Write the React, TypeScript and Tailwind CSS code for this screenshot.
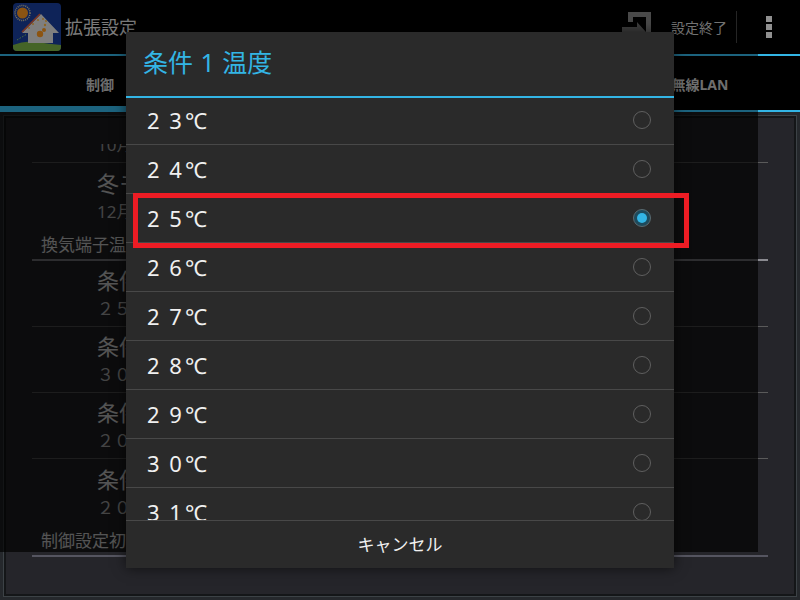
import React from "react"

const FONT = "[font-family:'Noto_Sans','Noto_Sans_CJK_JP','Liberation_Sans',sans-serif]"

const Logo: React.FC = () => (
  <svg width="48" height="48" viewBox="0 0 48 48" className="rounded-sm">
    <rect width="48" height="48" fill="#1b40a0" />
    <path d="M0 48V42Q12 37 24 39T48 42V48Z" fill="#7fb648" />
    <circle cx="9.5" cy="10" r="7.5" fill="none" stroke="#e8d8a8" strokeWidth="1.5" strokeDasharray="1 1" />
    <circle cx="9.5" cy="10" r="5.5" fill="#ff9a20" />
    <path d="M9 30L28 11L46 30H40V40H15V30Z" fill="#e8e8e8" />
    <path d="M9 29L27 11" stroke="#e8603a" strokeWidth="1.5" />
    <circle cx="27" cy="31" r="3.2" fill="#ff9a20" />
    <circle cx="31" cy="27" r="2" fill="#ff9a20" />
    <circle cx="33" cy="18" r="1" fill="#ffb840" />
    <circle cx="30" cy="16" r="1" fill="#ffb840" />
    <circle cx="32" cy="22" r="1.2" fill="#ffb840" />
    <circle cx="25" cy="17" r="1" fill="#ffb840" />
    <circle cx="20" cy="21" r="1" fill="#ffb840" />
    <circle cx="16" cy="25" r="1" fill="#ffb840" />
    <path d="M4 37L14 31" stroke="#8fce6a" strokeWidth="1" strokeDasharray="1.5 1.5" />
  </svg>
)

const Header: React.FC = () => (
  <div className="h-[54px] flex items-center bg-black shrink-0">
    <div className="ml-[13px] h-12 w-12">
      <Logo />
    </div>
    <span className="ml-1 text-[18px] text-[#e0e0e0]">拡張設定</span>
    <div className="ml-auto flex items-center h-full">
      <svg width="31" height="30" viewBox="0 0 31 30" className="self-start mt-[12px]">
        <path d="M6 0H29V28H6V10H11V5H24V23H6Z" fill="#888" fillRule="evenodd" />
        <path d="M0 15H15V10L24 20L15 30V25H0Z" fill="#707070" />
      </svg>
      <span className="ml-[18px] text-[14px] text-[#d0d0d0]">設定終了</span>
      <div className="ml-[9px] h-8 w-px bg-[#444]" />
      <div className="w-[63px] flex flex-col items-center gap-[2px]">
        <div className="h-[6px] w-[6px] bg-[#909090]" />
        <div className="h-[6px] w-[6px] bg-[#909090]" />
        <div className="h-[6px] w-[6px] bg-[#909090]" />
      </div>
    </div>
  </div>
)

const Tabs: React.FC = () => (
  <div className="h-[58px] shrink-0 bg-black flex border-t-2 border-[#33b5e5]">
    {["制御", "時刻", "設定", "無線LAN"].map((tab, i) => (
      <div
        key={tab}
        className={
          i === 0
            ? "flex-1 flex items-center justify-center pt-[7px] text-[14px] font-bold text-[#c8c8c8] border-b-[6px] border-[#33b5e5]"
            : "flex-1 flex items-center justify-center pt-[3px] text-[14px] font-bold text-[#c8c8c8] border-b-2 border-[#33b5e5]"
        }
      >
        {tab}
      </div>
    ))}
  </div>
)

const SettingRow: React.FC<{ title: string; sub: string; noLine?: boolean }> = ({ title, sub, noLine }) => (
  <div
    className={
      noLine
        ? "h-[66px] pl-[65px] pt-[2px] flex flex-col justify-center"
        : "h-[66px] pl-[65px] pt-[2px] border-b border-[#5a5a5a] flex flex-col justify-center"
    }
  >
    <div className="text-[22px] leading-[24px] text-white">{title}</div>
    <div className="mt-[5px] text-[17px] leading-[24px] text-[#d0d0d0]">{sub}</div>
  </div>
)

const Section: React.FC<{ label: string; lineClass: string }> = ({ label, lineClass }) => (
  <div className={"h-[32px] pl-[9px] pt-[4px] border-b-2 text-[17px] leading-[24px] text-white " + lineClass}>
    {label}
  </div>
)

const Background: React.FC = () => (
  <div className="h-[600px] flex flex-col bg-[#25282c]">
    <Header />
    <Tabs />
    <div className="flex-1 min-h-0 m-[3px] border border-[#3c4246] bg-[#141618] p-[2px]">
      <div className="relative h-full bg-[#25252a] overflow-hidden px-[26px]">
        <div className="-mt-[21px]">
          <SettingRow title="夏モード期間" sub="10月" />
          <SettingRow title="冬モード期間" sub="12月" noLine />
          <Section label="換気端子温度設定" lineClass="border-[#8a8a90]" />
          <SettingRow title="条件 1 温度" sub="２５℃" />
          <SettingRow title="条件 2 温度" sub="３０℃" />
          <SettingRow title="条件 3 温度" sub="２０℃" />
          <SettingRow title="条件 4 温度" sub="２０℃" noLine />
          <Section label="制御設定初期化" lineClass="border-[#555560]" />
        </div>
        {/* list's fading edge at the top */}
        <div className="absolute left-0 right-0 top-0 h-[26px] bg-[#25252a]" />
      </div>
    </div>
  </div>
)

const temps = ["2 3", "2 4", "2 5", "2 6", "2 7", "2 8", "2 9", "3 0", "3 1"]

const TempRow: React.FC<{ label: string; checked: boolean }> = ({ label, checked }) => (
  <div className="h-[49px] shrink-0 border-b border-[#484848] flex items-center pl-[21px] pr-[23px]">
    <span className="text-[22px] text-[#f0f0f0] [word-spacing:4px]">{label}</span>
    <span className="ml-[3px] text-[22px] text-[#f0f0f0]">℃</span>
    {checked ? (
      <div className="ml-auto h-[18px] w-[18px] rounded-full border border-[#5a6a70] bg-[#1d4a5c] flex items-center justify-center">
        <div className="h-[10px] w-[10px] rounded-full bg-[#33b5e5]" />
      </div>
    ) : (
      <div className="ml-auto h-[18px] w-[18px] rounded-full border border-[#5f5f5f]" />
    )}
  </div>
)

const App: React.FC = () => (
  <div className={"relative w-[800px] h-[600px] overflow-hidden " + FONT}>
    <Background />
    <div className="absolute left-0 top-0 w-[758px] h-[552px] bg-black/45" />
    <div className="absolute left-0 top-[112px] w-[758px] h-[440px] bg-black/40" />
    <div className="absolute left-[126px] top-[32px] w-[548px] h-[536px] flex flex-col bg-[#2a2a2a] shadow-[0_0_12px_rgba(0,0,0,0.6)]">
      <div className="h-[64px] shrink-0 flex items-center pl-[17px] pb-[2px] text-[25px] text-[#33b5e5] [word-spacing:1px]">条件 1 温度</div>
      <div className="h-[2px] shrink-0 bg-[#33b5e5]" />
      <div className="flex-1 min-h-0 overflow-hidden">
        <div className="-mt-[2px]">
          {temps.map((t) => (
            <TempRow key={t} label={t} checked={t === "2 5"} />
          ))}
        </div>
      </div>
      <div className="h-[48px] shrink-0 border-t border-[#484848] flex items-center justify-center text-[17px] text-[#f0f0f0]">
        キャンセル
      </div>
    </div>
    <div className="absolute left-[133px] top-[193px] w-[556px] h-[55px] border-[5px] border-[#ed1c24]" />
  </div>
)

export default App
